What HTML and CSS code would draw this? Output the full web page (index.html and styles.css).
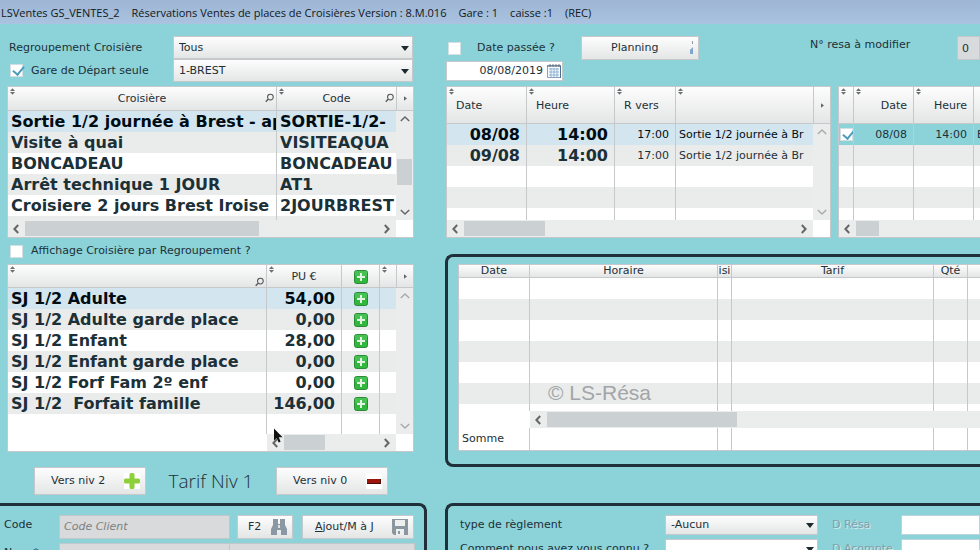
FILE: index.html
```html
<!DOCTYPE html>
<html lang="fr">
<head>
<meta charset="utf-8">
<title>LSVentes GS_VENTES_2</title>
<link rel="stylesheet" href="styles.css">
</head>
<body>
<svg class="defs" aria-hidden="true">
  <symbol id="sort" viewBox="0 0 6 8"><path d="M0 3.4 3 0l3 3.4zM0 4.6h6L3 8z"/></symbol>
  <symbol id="search" viewBox="0 0 10 10"><circle cx="6" cy="4" r="3.2" fill="none" stroke="#555" stroke-width="1.2"/><path d="M3.6 6.4.8 9.2" stroke="#555" stroke-width="1.4"/></symbol>
  <symbol id="left" viewBox="0 0 8 10"><path d="M6.2 1 2.4 5l3.800 4" fill="none" stroke="#666" stroke-width="2"/></symbol>
  <symbol id="right" viewBox="0 0 8 10"><path d="M1.800 1l3.800 4-3.800 4" fill="none" stroke="#666" stroke-width="2"/></symbol>
  <symbol id="up" viewBox="0 0 10 8"><path d="M.8 6 5 2l4.200 4" fill="none" stroke="currentColor" stroke-width="1.500"/></symbol>
  <symbol id="down" viewBox="0 0 10 8"><path d="M.8 2 5 6l4.200-4" fill="none" stroke="currentColor" stroke-width="1.500"/></symbol>
  <symbol id="more" viewBox="0 0 4 6"><path d="M0 0l4 3-4 3z" fill="#666"/></symbol>
  <symbol id="add" viewBox="0 0 14 14"><rect x=".5" y=".5" width="13" height="13" rx="2" fill="#2fb83c" stroke="#2c8a3a"/><path d="M1 1h12v5H1z" fill="#55c860" opacity=".6"/><path d="M7 3v8M3 7h8" stroke="#e4f2e4" stroke-width="2"/></symbol>
</svg>

<header class="titlebar">
  <span>LSVentes GS_VENTES_2</span><span>Réservations Ventes de places de Croisières Version : 8.M.016</span><span>Gare : 1</span><span>caisse :1</span><span>(REC)</span>
</header>

<main class="app">
  <section class="side">
    <div class="filters">
      <label for="group">Regroupement Croisière</label>
      <span class="pick"><select id="group"><option>Tous</option></select></span>
      <label class="check"><input type="checkbox" checked>Gare de Départ seule</label>
      <span class="pick"><select aria-label="Gare de départ"><option>1-BREST</option></select></span>
    </div>

    <div class="sheet cruises">
      <div class="view">
        <table>
          <colgroup><col><col class="w-code"></colgroup>
          <thead><tr>
            <th><svg class="sort"><use href="#sort"/></svg>Croisière<svg class="search"><use href="#search"/></svg></th>
            <th><svg class="sort"><use href="#sort"/></svg>Code<svg class="search"><use href="#search"/></svg></th>
          </tr></thead>
          <tbody class="strong">
            <tr class="selected"><td>Sortie 1/2 journée à Brest - ap</td><td>SORTIE-1/2-</td></tr>
            <tr><td>Visite à quai</td><td>VISITEAQUA</td></tr>
            <tr><td>BONCADEAU</td><td>BONCADEAU</td></tr>
            <tr><td>Arrêt technique 1 JOUR</td><td>AT1</td></tr>
            <tr><td>Croisiere 2 jours Brest Iroise</td><td>2JOURBREST</td></tr>
            <tr><td>Indisponible</td><td></td></tr>
          </tbody>
        </table>
      </div>
      <div class="rail">
        <button class="more" aria-label="Plus de colonnes"><svg><use href="#more"/></svg></button>
        <div class="vscroll"><svg><use href="#up"/></svg><i class="thumb"></i><svg><use href="#down"/></svg></div>
      </div>
      <div class="hscroll"><svg><use href="#left"/></svg><i class="thumb"></i><svg><use href="#right"/></svg></div>
    </div>

    <label class="check regroup"><input type="checkbox">Affichage Croisière par Regroupement ?</label>

    <div class="sheet fares">
      <div class="view">
        <table>
          <colgroup><col><col class="w-price"><col class="w-add"><col class="w-rest"></colgroup>
          <thead><tr>
            <th><svg class="sort"><use href="#sort"/></svg><svg class="search low"><use href="#search"/></svg></th>
            <th><svg class="sort"><use href="#sort"/></svg>PU €</th>
            <th><svg class="add"><use href="#add"/></svg></th>
            <th><svg class="sort"><use href="#sort"/></svg></th>
          </tr></thead>
          <tbody class="strong">
            <tr class="selected"><td>SJ 1/2 Adulte</td><td class="num">54,00</td><td class="mid"><svg class="add"><use href="#add"/></svg></td><td></td></tr>
            <tr><td>SJ 1/2 Adulte garde place</td><td class="num">0,00</td><td class="mid"><svg class="add"><use href="#add"/></svg></td><td></td></tr>
            <tr><td>SJ 1/2 Enfant</td><td class="num">28,00</td><td class="mid"><svg class="add"><use href="#add"/></svg></td><td></td></tr>
            <tr><td>SJ 1/2 Enfant garde place</td><td class="num">0,00</td><td class="mid"><svg class="add"><use href="#add"/></svg></td><td></td></tr>
            <tr><td>SJ 1/2 Forf Fam 2º enf</td><td class="num">0,00</td><td class="mid"><svg class="add"><use href="#add"/></svg></td><td></td></tr>
            <tr><td>SJ 1/2&nbsp; Forfait famille</td><td class="num">146,00</td><td class="mid"><svg class="add"><use href="#add"/></svg></td><td></td></tr>
            <tr class="rest"><td></td><td></td><td></td><td></td></tr>
          </tbody>
        </table>
      </div>
      <div class="rail">
        <button class="more" aria-label="Plus de colonnes"><svg><use href="#more"/></svg></button>
        <div class="vscroll idle"><svg><use href="#up"/></svg><svg><use href="#down"/></svg></div>
      </div>
      <div class="hscroll"><svg><use href="#left"/></svg><i class="thumb"></i><svg><use href="#right"/></svg></div>
      <svg class="pointer" viewBox="0 0 10 16"><path d="M1 1v12l2.800-2.600L5.600 15l2-.8L5.800 9.800h3.700z" fill="#111"/></svg>
    </div>

    <div class="levels">
      <button class="btn level">Vers niv 2<svg viewBox="0 0 16 16"><path fill="#fff" d="M0 0h16v16H0z"/><path d="M5.500 1.500q0-1.500 1.500-1.500h2q1.500 0 1.500 1.500v4h4q1.500 0 1.500 1.500v2q0 1.500-1.500 1.500h-4v4q0 1.500-1.500 1.500H7q-1.500 0-1.500-1.500v-4h-4Q0 10.500 0 9V7q0-1.500 1.500-1.500h4z" fill="#8ed03a"/></svg></button>
      <h1>Tarif Niv 1</h1>
      <button class="btn level">Vers niv 0<svg viewBox="0 0 16 16"><path fill="#fff" d="M0 0h16v16H0z"/><path d="M1 6h14v5H1z" fill="#9c140c"/><path d="M14 6h1v5H1v-1h13z" fill="#4d0b08"/></svg></button>
    </div>

    <form class="box client">
      <label for="code">Code</label>
      <div class="line">
        <input id="code" class="gray" placeholder="Code Client">
        <button type="button" class="btn f2">F2<svg viewBox="0 0 16 16"><path d="M2 0h5v3H2zM9 0h5v3H9z" fill="#8a98a3"/><path d="M2 3h5v2h2V3h5v3l2 4v6h-6v-5H6v5H0v-6l2-4z" fill="#8a98a3"/><path d="M7 6h2v3H7z" fill="#dfe3e5"/></svg></button>
        <button type="button" class="btn save"><span><u>A</u>jout/M à J</span><svg viewBox="0 0 16 16"><path d="M0 0h16v16H2l-2-2z" fill="#8b979f"/><path d="M3 1h10v6H3zM4 10h8v6H4z" fill="#eef0f0"/><path d="M6 12h2v3H6z" fill="#8b979f"/></svg></button>
      </div>
      <label for="name">Nom *</label>
      <div class="pair"><input id="name" class="gray"><input class="gray" aria-label="Prénom"></div>
    </form>
  </section>

  <section class="content">
    <div class="toolbar">
      <div class="dates">
        <label class="check past"><input type="checkbox">Date passée ?</label>
        <span class="date"><input value="08/08/2019" aria-label="Date"><svg viewBox="0 0 14 14"><path d="M.5 1.500h13v12H.5z" fill="#f7fafc" stroke="#8aa3b8"/><path d="M0 2h14M13.500 2v12" stroke="#4b6f91"/><path d="M3 0v3M6 0v3M9 0v3M12 0v3" stroke="#777"/><path d="M2 5h10M2 8h10M2 11h10M4 4v9M7 4v9M10 4v9" stroke="#8db4d5" fill="none"/></svg></span>
      </div>
      <button class="btn planning">Planning<svg viewBox="0 0 4 14"><path d="M2 0h1v3H2z" fill="#999"/><path d="M0 13V9l3-3v7z" fill="#7fa6cc"/></svg></button>
      <label class="resa" for="resa">N° resa à modifier</label>
      <input id="resa" class="gray" value="0">
    </div>

    <div class="pairs">
      <div class="sheet tall departures">
        <div class="view">
          <table>
            <colgroup><col class="w-date"><col class="w-hour"><col class="w-back"><col></colgroup>
            <thead><tr>
              <th><svg class="sort"><use href="#sort"/></svg>Date</th>
              <th><svg class="sort"><use href="#sort"/></svg>Heure</th>
              <th><svg class="sort"><use href="#sort"/></svg>R vers</th>
              <th><svg class="sort"><use href="#sort"/></svg></th>
            </tr></thead>
            <tbody>
              <tr class="selected"><td class="num big">08/08</td><td class="num big">14:00</td><td class="num">17:00</td><td>Sortie 1/2 journée à Br</td></tr>
              <tr><td class="num big">09/08</td><td class="num big">14:00</td><td class="num">17:00</td><td>Sortie 1/2 journée à Br</td></tr>
              <tr><td></td><td></td><td></td><td></td></tr>
              <tr><td></td><td></td><td></td><td></td></tr>
              <tr><td></td><td></td><td></td><td></td></tr>
            </tbody>
          </table>
        </div>
        <div class="rail">
          <button class="more" aria-label="Plus de colonnes"><svg><use href="#more"/></svg></button>
          <div class="vscroll idle"><svg><use href="#up"/></svg><svg><use href="#down"/></svg></div>
        </div>
        <div class="hscroll"><svg><use href="#left"/></svg><i class="thumb"></i><svg><use href="#right"/></svg></div>
      </div>

      <div class="sheet tall open chosen">
        <div class="view">
          <table>
            <colgroup><col class="w-tick"><col class="w-day"><col class="w-day"><col></colgroup>
            <thead><tr>
              <th><svg class="sort"><use href="#sort"/></svg></th>
              <th class="num"><svg class="sort"><use href="#sort"/></svg>Date</th>
              <th class="num"><svg class="sort"><use href="#sort"/></svg>Heure</th>
              <th></th>
            </tr></thead>
            <tbody>
              <tr class="active"><td><input type="checkbox" checked aria-label="Choisir"></td><td class="num">08/08</td><td class="num">14:00</td><td>B</td></tr>
              <tr><td></td><td></td><td></td><td></td></tr>
              <tr><td></td><td></td><td></td><td></td></tr>
              <tr><td></td><td></td><td></td><td></td></tr>
              <tr><td></td><td></td><td></td><td></td></tr>
            </tbody>
          </table>
        </div>
        <div class="hscroll"><svg><use href="#left"/></svg><i class="thumb"></i></div>
      </div>
    </div>

    <div class="box order">
      <div class="sheet open basket">
        <div class="view">
          <table>
            <colgroup><col class="w-bdate"><col class="w-slot"><col class="w-cruise"><col class="w-fare"><col class="w-qty"><col></colgroup>
            <thead><tr><th>Date</th><th>Horaire</th><th>isi</th><th>Tarif</th><th>Qté</th><th></th></tr></thead>
            <tbody>
              <tr><td></td><td></td><td></td><td></td><td></td><td></td></tr>
              <tr><td></td><td></td><td></td><td></td><td></td><td></td></tr>
              <tr><td></td><td></td><td></td><td></td><td></td><td></td></tr>
              <tr><td></td><td></td><td></td><td></td><td></td><td></td></tr>
              <tr><td></td><td></td><td></td><td></td><td></td><td></td></tr>
              <tr><td></td><td></td><td></td><td></td><td></td><td></td></tr>
              <tr><td></td><td></td><td></td><td></td><td></td><td></td></tr>
            </tbody>
          </table>
        </div>
        <div class="hscroll"><svg><use href="#left"/></svg><i class="thumb"></i></div>
        <table class="total">
          <colgroup><col class="w-bdate"><col class="w-slot"><col class="w-cruise"><col class="w-fare"><col class="w-qty"><col></colgroup>
          <tbody><tr><td>Somme</td><td></td><td></td><td></td><td></td><td></td></tr></tbody>
        </table>
        <span class="mark">© LS-Résa</span>
      </div>
    </div>

    <form class="box payment">
      <label for="pay">type de règlement</label>
      <span class="pick"><select id="pay"><option>-Aucun</option></select></span>
      <label class="off" for="dresa">D Résa</label>
      <input id="dresa">
      <label for="known">Comment nous avez vous connu ?</label>
      <span class="pick blank"><select id="known"><option></option></select></span>
      <label class="off" for="dacompte">D Acompte</label>
      <input id="dacompte">
    </form>
  </section>
</main>
</body>
</html>
```

FILE: styles.css
```css
* { box-sizing: border-box; }

:root {
  --sea: #8cd3d9;
  --ink: #1c3038;
  --edge: #c6c9cc;
  --stripe: #eaecec;
  --raised: linear-gradient(#fdfdfd, #e4e5e5);
}

body {
  margin: 0;
  height: 100vh;
  overflow: hidden;
  display: flex;
  flex-direction: column;
  background: var(--sea);
  color: var(--ink);
  font: 11px/14px "DejaVu Sans", Verdana, sans-serif;
}

input, select, button { font: inherit; color: inherit; margin: 0; border-radius: 0; }
.defs { position: absolute; width: 0; height: 0; }

.titlebar {
  flex: none;
  height: 24px;
  padding: 2px 1px 0;
  display: flex;
  align-items: center;
  gap: 12px;
  white-space: nowrap;
  background: linear-gradient(#9eb5d4, #a9c3e0);
  color: #111820;
  font: 11px/16px "Open Sans", "Noto Sans", sans-serif;
}

.app { flex: 1; min-height: 0; display: flex; gap: 18px; }
.side { flex: none; width: 427px; display: flex; flex-direction: column; }
.content { flex: 1; min-width: 0; display: flex; flex-direction: column; }

/* Controls */
.pick { position: relative; display: block; }
.pick::after {
  content: "";
  position: absolute;
  right: 4px;
  top: calc(50% - 2px);
  border: 4px solid transparent;
  border-top: 5px solid #1c2a30;
  border-bottom: 0;
  pointer-events: none;
}
.pick select {
  appearance: none;
  display: block;
  width: 100%;
  height: 100%;
  padding: 0 5px;
  border: 1px solid var(--edge);
  background: var(--raised);
  outline: 0;
}
.check { display: flex; align-items: center; gap: 8px; }
input[type="checkbox"] {
  appearance: none;
  flex: none;
  display: grid;
  width: 13px;
  height: 13px;
  background: #fff;
  border: 1px solid #d3dfe2;
}
input[type="checkbox"]:checked::before {
  content: "";
  width: 5px;
  height: 9px;
  margin: -1px 0 0 4px;
  border: solid #4a9cbd;
  border-width: 0 2px 2px 0;
  transform: rotate(40deg);
}
.btn {
  display: flex;
  align-items: center;
  padding: 0 6px;
  border: 1px solid var(--edge);
  background: var(--raised);
}
.btn svg { flex: none; width: 16px; height: 16px; margin-left: auto; }
.gray {
  min-width: 0;
  padding: 0 4px;
  border: 1px solid #c2c8ca;
  background: #d9dadb;
}
.gray::placeholder { color: #7b7f82; font-style: italic; opacity: 1; }

/* Grids with their scroll bars */
.sheet {
  position: relative;
  display: grid;
  grid-template-columns: minmax(0, 1fr) 17px;
  border: 1px solid var(--edge);
  background: #fff;
}
.sheet.open { grid-template-columns: minmax(0, 1fr); border-right: 0; }
.view { overflow: hidden; }
table { width: 100%; table-layout: fixed; border-collapse: separate; border-spacing: 0; }
th {
  position: relative;
  height: 24px;
  padding: 1px 9px 0;
  overflow: hidden;
  border-right: 1px solid var(--edge);
  border-bottom: 1px solid var(--edge);
  background: var(--raised);
  font-weight: normal;
}
td {
  height: 21px;
  padding: 0 3px;
  overflow: hidden;
  white-space: nowrap;
  border-right: 1px solid var(--edge);
}
th:last-child, td:last-child { border-right: 0; }
tbody tr:nth-child(even) { background: var(--stripe); }
tbody tr.selected { background: #d3e5ee; color: #000c14; }
tbody tr.active { background: var(--sea); }
.strong td, .big { font-weight: bold; font-size: 16px; line-height: 21px; }
.num { text-align: right; padding-right: 6px; }
.mid { text-align: center; }
.tall th { height: 37px; text-align: left; }
.tall th.num { text-align: right; }

.sort { position: absolute; left: 2px; top: 1px; width: 5px; height: 7px; fill: #6c6f72; }
.search { position: absolute; right: 2px; top: 6px; width: 9px; height: 10px; }
.search.low { top: 12px; }
.add { display: block; width: 14px; height: 14px; margin: 0 auto; }

.rail { display: flex; flex-direction: column; }
.more {
  flex: none;
  display: grid;
  place-items: center;
  height: 24px;
  padding: 0;
  border: solid var(--edge);
  border-width: 0 0 1px 1px;
  background: var(--raised);
}
.more svg { width: 3px; height: 5px; }
.tall .more { height: 37px; }
.vscroll, .hscroll { display: flex; justify-content: space-between; align-items: center; background: #ebeded; }
.vscroll { flex: 1; flex-direction: column; padding: 4px 0; color: #666; }
.vscroll.idle { color: #aaa; }
.vscroll svg { width: 10px; height: 8px; }
.vscroll .thumb { width: 15px; height: 26px; margin-top: 12px; }
.hscroll { height: 17px; padding: 0 5px 0 4px; }
.hscroll svg { flex: none; width: 8px; height: 10px; }
.hscroll .thumb { height: 15px; margin: 0 auto 0 5px; }
.thumb { background: #cbd0d3; }

/* Side column */
.filters {
  display: grid;
  grid-template-columns: 164px 240px;
  grid-template-rows: 23px 23px;
  align-items: center;
  padding: 12px 0 0 9px;
}
.filters .pick { height: 100%; }
.filters .check { padding-left: 1px; }
.cruises, .fares { width: 407px; margin-left: 7px; }
.cruises { margin-top: 4px; grid-template-rows: 133px 17px; }
.cruises .thumb { width: 234px; }
.cruises .vscroll .thumb { width: 15px; }
.regroup { height: 14px; margin: 6px 0 6px 10px; }
.fares { grid-template-rows: 169px 17px; }
.fares th, .fares .more { height: 23px; }
.fares .hscroll { margin-left: 259px; }
.fares .thumb { width: 41px; }
.w-code { width: 119px; }
.w-price { width: 75px; }
.w-add { width: 38px; }
.w-rest { width: 16px; }
.pointer { position: absolute; left: 265px; bottom: 7px; width: 10px; height: 17px; }

.levels { display: flex; align-items: center; gap: 20px; height: 28px; margin: 15px 0 8px 34px; }
.level { width: 112px; height: 28px; padding: 0 5px 0 16px; }
.levels h1 { margin: 0; width: 90px; text-align: center; white-space: nowrap; font: 300 19px/28px "Open Sans", "Noto Sans", sans-serif; }

.box { border: 3px solid #20303a; border-radius: 8px; }
.client {
  flex: 1;
  display: grid;
  grid-template-columns: 55px 356px;
  grid-template-rows: 24px 24px;
  gap: 4px 0;
  padding: 9px 0 0 4px;
  border-left: 0;
  border-bottom: 0;
  border-radius: 0 8px 0 0;
}
.client label { line-height: 20px; }
.line, .pair { display: flex; }
.line .gray { width: 171px; }
.f2 { width: 56px; margin: 0 9px 0 7px; padding: 0 5px 0 10px; }
.save { width: 112px; padding: 0 5px 0 12px; }
.pair .gray:first-child { width: 171px; }
.pair .gray:last-child { flex: 1; border-left: 0; }

/* Content column */
.toolbar { flex: none; display: flex; align-items: flex-start; height: 62px; padding: 12px 0 0 1px; }
.dates { width: 135px; }
.past { gap: 16px; height: 24px; padding-left: 2px; }
.date {
  display: flex;
  align-items: center;
  width: 117px;
  height: 20px;
  margin-top: 1px;
  padding: 0 1px 0 4px;
  border: 1px solid var(--edge);
  background: #fff;
}
.date input { width: 92px; padding: 0; border: 0; text-align: right; background: none; }
.date svg { width: 14px; height: 14px; margin-left: auto; }
.planning { width: 118px; height: 24px; padding: 0 4px 0 29px; }
.planning svg { width: 4px; height: 14px; }
.resa { width: 147px; margin-left: 111px; padding-top: 2px; }
#resa { flex: 1; height: 24px; }

.pairs { flex: none; display: flex; gap: 7px; padding-left: 1px; }
.tall { grid-template-rows: 133px 17px; }
.departures { flex: none; width: 385px; }
.departures .thumb { width: 81px; }
.chosen { flex: 1; }
.chosen .thumb { width: 23px; }
.w-date { width: 80px; }
.w-hour { width: 88px; }
.w-back { width: 61px; }
.w-tick { width: 15px; }
.w-day { width: 60px; }
.chosen td:first-child { padding: 0 1px; }

.order { flex: none; margin-top: 16px; padding: 7px 0 13px 10px; border-right: 0; border-radius: 8px 0 0 8px; }
.basket { grid-template-rows: 146px 17px 22px; }
.basket th { height: 13px; padding: 0; line-height: 12px; }
.basket .hscroll { margin-left: 71px; }
.basket .thumb { width: 190px; }
.w-bdate { width: 71px; }
.w-slot { width: 188px; }
.w-cruise { width: 14px; }
.w-fare { width: 202px; }
.w-qty { width: 34px; }
.mark { position: absolute; left: 89px; top: 117px; color: #a2a5a7; font: 21px/22px "Liberation Sans", Arial, sans-serif; }

.payment {
  flex: 1;
  display: grid;
  grid-template-columns: 205px 153px 83px minmax(0, 1fr);
  grid-template-rows: 20px 20px;
  row-gap: 4px;
  align-items: center;
  margin-top: 36px;
  padding: 9px 0 0 12px;
  border-right: 0;
  border-bottom: 0;
  border-radius: 8px 0 0 0;
}
.payment .pick, .payment input { height: 20px; }
.payment input { min-width: 0; border: 1px solid #bcd3dc; background: #fff; }
.payment .blank select { background: #fff; }
.off { padding-left: 14px; white-space: nowrap; color: #83a0aa; text-shadow: 1px 1px #cfe9ec; }
```
